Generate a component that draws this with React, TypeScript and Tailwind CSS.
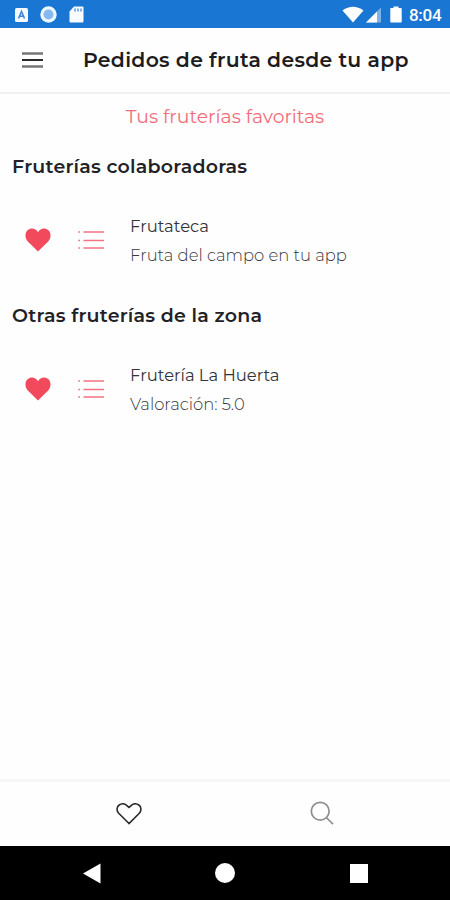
import React from "react";

function StatusBar() {
  return (
    <div className="flex h-7 shrink-0 items-center bg-[#1976d2] pl-[15px] pr-[9px] text-white">
      <svg width="13" height="14" viewBox="0 0 13 14" className="mt-px">
        <rect width="13" height="14" rx="1.5" fill="#f4f9ff" />
        <path d="M3.5 10.5 6.5 3.5 9.5 10.5M4.6 8.3H8.4" fill="none" stroke="#3d86d3" strokeWidth="1.6" />
      </svg>
      <svg width="17" height="17" viewBox="0 0 17 17" className="ml-3">
        <circle cx="8.5" cy="8.5" r="8.2" fill="#eef8ff" />
        <circle cx="8.5" cy="8.5" r="5" fill="#86b9ef" />
      </svg>
      <svg width="15" height="17" viewBox="0 0 15 17" className="ml-3">
        <path d="M5 .5h8.5a1 1 0 0 1 1 1v14a1 1 0 0 1-1 1h-12a1 1 0 0 1-1-1V5.5z" fill="#f8fbff" />
        <path d="M6 2.5v3M9 2.5v3M12 2.5v3" stroke="#5c9ddf" strokeWidth="1.5" />
      </svg>
      <div className="flex-1" />
      <svg width="22" height="17" viewBox="0 0 22 17">
        <path d="M.5 4.5Q11-3 21.5 4.5L11 16.5z" fill="#fff" />
      </svg>
      <svg width="17" height="17" viewBox="0 0 17 17" className="ml-px">
        <path d="M1 16.5 16 1.5V16.5z" fill="#7db1e9" />
        <path d="M1 16.5 12 5.5V16.5z" fill="#fff" />
      </svg>
      <svg width="12" height="17" viewBox="0 0 12 17" className="ml-2">
        <path d="M3.5.5h5V2H11a.7.7 0 0 1 .7.7v13a.8.8 0 0 1-.8.8H1.1a.8.8 0 0 1-.8-.8v-13A.7.7 0 0 1 1 2h2.5z" fill="#fff" />
      </svg>
      <span className="ml-[7px] mt-0.5 w-8 whitespace-nowrap font-['Roboto',sans-serif] text-[17px] font-medium leading-5 tracking-[-0.3px]">8:04</span>
    </div>
  );
}

function Heart() {
  return (
    <svg width="26" height="24" viewBox="0 0 26 24" className="shrink-0">
      <path d="M13 23.6 2.8 13.4C-.8 9.5.2 4.2 2.8 2 5.8-.6 10.6-.1 13 4.2 15.4-.1 20.2-.6 23.2 2c2.6 2.2 3.6 7.5 0 11.4z" fill="#f2495d" />
    </svg>
  );
}

function ListIcon() {
  return (
    <svg width="27" height="20" viewBox="0 0 27 20" className="ml-[27px] shrink-0">
      <path d="M5.5 2H26M5.5 10.5H26M5.5 18H26" stroke="#f27383" strokeWidth="1.5" />
      <path d="M.3 2H2M.3 10.5H2M.3 18H2" stroke="#f27383" strokeWidth="1.5" />
    </svg>
  );
}

function Section({ heading, name, detail }: { heading: string; name: string; detail: string }) {
  return (
    <section className="h-[149px] shrink-0">
      <h2 className="pl-3 text-[19px] font-semibold leading-6 tracking-[0.22px] text-[#222226]">{heading}</h2>
      <div className="mt-9 flex items-start pl-[25px]">
        <div className="flex items-center pt-[13px]">
          <Heart />
          <ListIcon />
        </div>
        <div className="ml-[25px] whitespace-nowrap text-[16.4px] leading-[29px]">
          <div className="-mt-[3px] text-[#333338]">{name}</div>
          <div className="font-light text-[#38383d]">{detail}</div>
        </div>
      </div>
    </section>
  );
}

export default function App() {
  return (
    <div className="flex h-[900px] w-[450px] flex-col overflow-hidden bg-[#fefefe] font-['Montserrat','Inter',sans-serif]">
      <StatusBar />
      <header className="flex h-[66px] shrink-0 items-center border-b-2 border-[#f1f1f1] pl-[22px]">
        <svg width="21" height="16" viewBox="0 0 21 16" className="-mt-px">
          <path d="M0 1.5H21M0 14.5H21" stroke="#77777a" strokeWidth="2.6" />
          <path d="M0 8H21" stroke="#29292c" strokeWidth="2" />
        </svg>
        <h1 className="ml-10 whitespace-nowrap text-[20.4px] font-semibold tracking-[0.3px] text-[#1c1c20]">Pedidos de fruta desde tu app</h1>
      </header>
      <main className="flex flex-1 flex-col">
        <p className="mt-[11px] text-center text-[18.8px] leading-6 text-[#f26c7c]">Tus fruterías favoritas</p>
        <div className="mt-[26px]">
          <Section heading="Fruterías colaboradoras" name="Frutateca" detail="Fruta del campo en tu app" />
          <Section heading="Otras fruterías de la zona" name="Frutería La Huerta" detail="Valoración: 5.0" />
        </div>
      </main>
      <nav className="flex h-[67px] shrink-0 items-center border-t-[3px] border-[#f7f7f7] px-8">
        <div className="flex flex-1 justify-center">
          <svg width="26" height="22" viewBox="0 0 26 22" fill="none" stroke="#2a2a2d" strokeWidth="1.6">
            <path d="M13 20.5 2.7 10.2C.2 7.5.7 3.7 3.2 2c2.8-1.7 6-1.3 8 .9L13 4.4l1.8-1.5c2-2.2 5.2-2.6 8-.9 2.5 1.7 3 5.5.5 8.2z" />
          </svg>
        </div>
        <div className="flex flex-1 justify-center">
          <svg width="24" height="24" viewBox="0 0 24 24" fill="none" stroke="#8e8e90" strokeWidth="1.7" className="-mt-0.5">
            <circle cx="10.2" cy="10.2" r="8.9" />
            <path d="M16.3 16.5 23 23.2" />
          </svg>
        </div>
      </nav>
      <footer className="flex h-[54px] shrink-0 items-center bg-black pl-[83px]">
        <svg width="18" height="21" viewBox="0 0 18 21"><path d="M0 10.5 17.5.5V20.5z" fill="#fff" /></svg>
        <div className="ml-[114px] size-5 rounded-full bg-white" />
        <div className="ml-[115px] h-[19px] w-[18px] bg-white" />
      </footer>
    </div>
  );
}
